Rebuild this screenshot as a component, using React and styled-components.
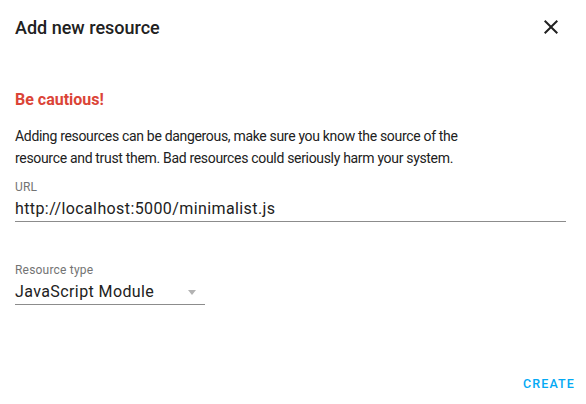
import React from "react";
import styled, { createGlobalStyle } from "styled-components";

const GlobalStyle = createGlobalStyle`
  html, body {
    margin: 0;
    padding: 0;
    background: #ffffff;
  }
  body {
    font-family: Roboto, "Noto Sans", sans-serif;
    color: #212121;
    -webkit-font-smoothing: antialiased;
  }
`;

const Dialog = styled.div`
  width: 586px;
  height: 404px;
  box-sizing: border-box;
  display: flex;
  flex-direction: column;
  background: #fff;
`;

const Header = styled.div`
  height: 56px;
  display: flex;
  align-items: center;
  justify-content: space-between;
  padding: 0 23px 0 15px;
  box-sizing: border-box;
`;

const Title = styled.h2`
  margin: 0;
  font-size: 18px;
  font-weight: 500;
  line-height: 24px;
  margin-top: -1px;
  color: #212121;
`;

const CloseButton = styled.button`
  border: 0;
  background: none;
  padding: 0;
  width: 24px;
  height: 24px;
  display: flex;
  align-items: center;
  justify-content: center;
  color: #212121;
  cursor: pointer;
  margin-top: -2px;
`;

const Content = styled.div`
  padding: 0 20px 0 15px;
  display: flex;
  flex-direction: column;
`;

const Warning = styled.h3`
  margin: 34px 0 0;
  font-size: 16px;
  font-weight: 700;
  line-height: 20px;
  color: #db4437;
`;

const Text = styled.p`
  margin: 15px 0 0;
  max-width: 460px;
  font-size: 14px;
  letter-spacing: -0.32px;
  line-height: 22px;
  color: #212121;
`;

const Field = styled.label`
  display: flex;
  flex-direction: column;
  margin-top: ${(p) => p.$gap}px;
  width: ${(p) => (p.$width ? `${p.$width}px` : "auto")};
  border-bottom: 1px solid #8c8c8c;
`;

const Label = styled.span`
  font-size: 12px;
  line-height: 16px;
  letter-spacing: 0.2px;
  color: #737373;
  margin-bottom: 1px;
`;

const Input = styled.input`
  border: 0;
  outline: none;
  padding: 0;
  margin: 0;
  font-family: inherit;
  font-size: 16px;
  letter-spacing: 0.4px;
  line-height: 25px;
  height: 25px;
  color: #212121;
  background: transparent;
`;

const SelectValue = styled.div`
  display: flex;
  align-items: center;
  justify-content: space-between;
  font-size: 16px;
  letter-spacing: 0.4px;
  line-height: 25px;
  color: #212121;
  padding-right: 9px;
`;

const Arrow = styled.span`
  width: 0;
  height: 0;
  border-left: 4.5px solid transparent;
  border-right: 4.5px solid transparent;
  border-top: 5px solid #b3b3b3;
  margin-top: 1px;
`;

const Actions = styled.div`
  margin-top: auto;
  display: flex;
  justify-content: flex-end;
  padding: 0 11px 10px 0;
`;

const TextButton = styled.button`
  border: 0;
  background: none;
  padding: 0;
  font-family: inherit;
  font-size: 12.5px;
  font-weight: 500;
  letter-spacing: 1.1px;
  line-height: 20px;
  text-transform: uppercase;
  color: #03a9f4;
  cursor: pointer;
`;

const CloseIcon = () => (
  <svg width="24" height="24" viewBox="0 0 24 24" fill="currentColor">
    <path d="M19 6.41L17.59 5 12 10.59 6.41 5 5 6.41 10.59 12 5 17.59 6.41 19 12 13.41 17.59 19 19 17.59 13.41 12z" />
  </svg>
);

export default function App() {
  return (
    <>
      <GlobalStyle />
      <Dialog>
        <Header>
          <Title>Add new resource</Title>
          <CloseButton aria-label="Close">
            <CloseIcon />
          </CloseButton>
        </Header>
        <Content>
          <Warning>Be cautious!</Warning>
          <Text>
            Adding resources can be dangerous, make sure you know the source of
            the resource and trust them. Bad resources could seriously harm your
            system.
          </Text>
          <Field $gap={10}>
            <Label>URL</Label>
            <Input defaultValue="http://localhost:5000/minimalist.js" />
          </Field>
          <Field $gap={40} $width={190}>
            <Label>Resource type</Label>
            <SelectValue>
              JavaScript Module
              <Arrow />
            </SelectValue>
          </Field>
        </Content>
        <Actions>
          <TextButton>Create</TextButton>
        </Actions>
      </Dialog>
    </>
  );
}
